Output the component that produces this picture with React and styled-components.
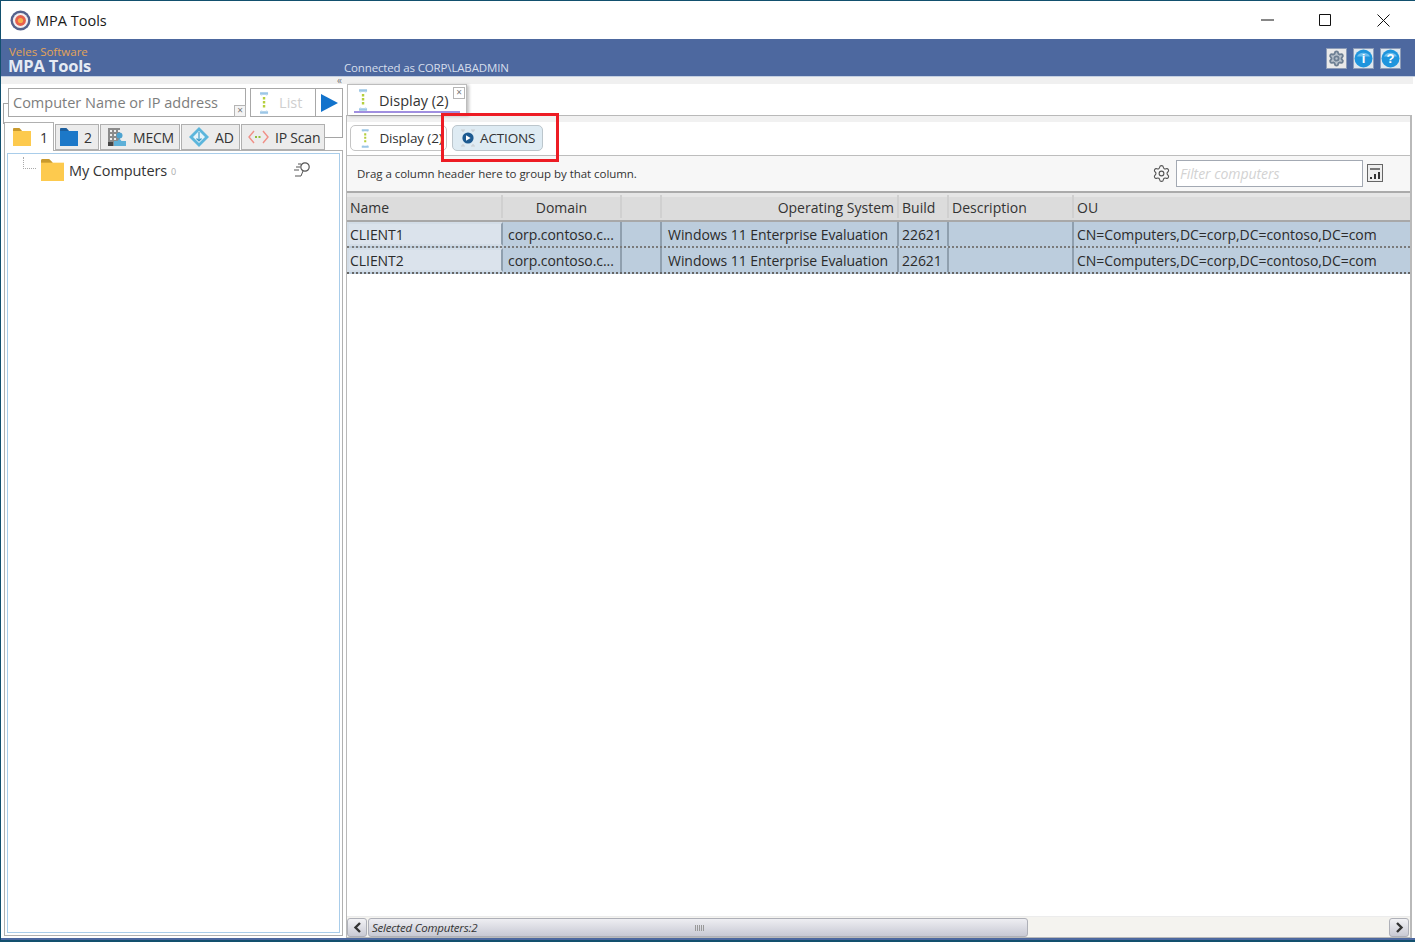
import React from "react";
import styled, { createGlobalStyle } from "styled-components";
import { Settings } from "lucide-react";

const GlobalStyle = createGlobalStyle`
  html, body { margin: 0; padding: 0; background: #fff; overflow: hidden; }
  body { font-family: "Open Sans", "Noto Sans", sans-serif; color: #333; }
  * { box-sizing: border-box; }
`;

const Frame = styled.div`
  width: 1415px;
  height: 942px;
  display: flex;
  flex-direction: column;
  border-top: 1px solid #12506e;
  border-left: 1px solid #12506e;
  background: #fff;
`;

const TitleBar = styled.div`
  height: 38px;
  flex: none;
  display: flex;
  align-items: center;
  padding-left: 9px;
  font-size: 14.5px;
  color: #1a1a1a;
`;

const TitleText = styled.span`
  margin-left: 5px;
`;

const WindowButtons = styled.div`
  margin-left: auto;
  display: flex;
  padding-right: 3px;
`;

const WindowButton = styled.div`
  width: 58px;
  height: 38px;
  display: flex;
  align-items: center;
  justify-content: center;
`;

const Header = styled.div`
  height: 38px;
  flex: none;
  display: flex;
  align-items: flex-end;
  background: #4d689f;
  border-bottom: 1px solid #c3cfe2;
  padding-left: 7px;
  position: relative;
`;

const Brand = styled.div`
  width: 336px;
  display: flex;
  flex-direction: column;
  padding-bottom: 1px;
`;

const Vendor = styled.div`
  font-size: 11.5px;
  line-height: 11px;
  color: #e3a458;
  padding-left: 1px;
`;

const Product = styled.div`
  font-size: 16.5px;
  line-height: 18px;
  font-weight: 700;
  letter-spacing: -0.2px;
  color: #e6ebf4;
`;

const Connected = styled.div`
  font-size: 11.5px;
  line-height: 15px;
  padding-bottom: 1px;
  letter-spacing: -0.15px;
  color: #d5deec;
`;

const HeaderButtons = styled.div`
  margin-left: auto;
  display: flex;
  gap: 6px;
  padding: 0 14px 7px 0;
`;

const HeaderButton = styled.div`
  width: 21px;
  height: 21px;
  display: flex;
  align-items: center;
  justify-content: center;
  border: 1px solid #8d9cb8;
  background: ${(p) => p.$bg || "#e9e9e9"};
`;

const Strip = styled.div`
  height: 7px;
  flex: none;
  background: #f0f0f0;
  width: 1412px;
`;

const Collapse = styled.div`
  width: 341px;
  text-align: right;
  font-size: 10px;
  line-height: 7px;
  color: #777;
`;

const Columns = styled.div`
  flex: 1;
  min-height: 0;
  display: flex;
`;

const LeftPane = styled.div`
  width: 342px;
  flex: none;
  display: flex;
  flex-direction: column;
  padding: 4px 0 2px 2px;
`;

const SearchRow = styled.div`
  height: 30px;
  flex: none;
  display: flex;
  margin-left: 5px;
  position: relative;
  &::before {
    content: "";
    position: absolute;
    left: -5px;
    top: 15px;
    width: 5px;
    height: 20px;
    border-left: 1px solid #a5a5a5;
    border-top: 1px solid #a5a5a5;
  }
  &::after {
    content: "";
    position: absolute;
    left: 316px;
    top: 29px;
    width: 18px;
    height: 20px;
    border-right: 1px solid #a5a5a5;
    border-bottom: 1px solid #a5a5a5;
  }
`;

const SearchInput = styled.div`
  width: 238px;
  height: 29px;
  border: 1px solid #a8a8a8;
  font-size: 14.5px;
  line-height: 27px;
  padding-left: 4px;
  color: #7d7d7d;
  position: relative;
`;

const ClearBox = styled.div`
  position: absolute;
  right: -1px;
  bottom: -1px;
  width: 12px;
  height: 12px;
  border: 1px solid #b5b5b5;
  background: #f4f4f4;
  color: #777;
  font-size: 10px;
  line-height: 9px;
  text-align: center;
`;

const ListBox = styled.div`
  margin-left: 4px;
  width: 66px;
  height: 29px;
  border: 1px solid #a8a8a8;
  display: flex;
  align-items: center;
  padding-left: 7px;
  gap: 9px;
  font-size: 14.5px;
  color: #cfcfcf;
`;

const GoBox = styled.div`
  width: 27px;
  height: 29px;
  border: 1px solid #a8a8a8;
  border-left: none;
  display: flex;
  align-items: center;
  justify-content: center;
`;

const TabRow = styled.div`
  height: 28px;
  flex: none;
  margin-top: 4px;
  display: flex;
  align-items: flex-end;
  margin-left: 1px;
  position: relative;
  z-index: 1;
`;

const SideTab = styled.div`
  height: ${(p) => (p.$active ? "29px" : "26px")};
  width: ${(p) => p.$w}px;
  flex: none;
  display: flex;
  align-items: center;
  gap: ${(p) => p.$gap ?? 6}px;
  padding-left: ${(p) => p.$pad ?? 5}px;
  font-size: 14px;
  color: #333;
  letter-spacing: -0.2px;
  background: ${(p) => (p.$active ? "#fff" : "#ececec")};
  border: 1px solid #b0b0b0;
  border-bottom: ${(p) => (p.$active ? "none" : "1px solid #b0b0b0")};
  margin-bottom: ${(p) => (p.$active ? "-1px" : "0")};
  margin-left: ${(p) => (p.$active ? "0" : "1px")};
`;

const SidePanel = styled.div`
  flex: 1;
  min-height: 0;
  margin-left: 1px;
  width: 339px;
  border: 1px solid #b0b0b0;
  padding: 2px;
`;

const TreeBox = styled.div`
  height: 100%;
  border: 1px solid #a9cdea;
  position: relative;
`;

const TreeRow = styled.div`
  display: flex;
  align-items: center;
  height: 26px;
  margin-top: 3px;
  padding-left: 33px;
  font-size: 14.5px;
  color: #333;
  letter-spacing: -0.1px;
  position: relative;
  &::before {
    content: "";
    position: absolute;
    left: 15px;
    top: 0;
    width: 12px;
    height: 11px;
    border-left: 1px dotted #aaa;
    border-bottom: 1px dotted #aaa;
  }
`;

const TreeLabel = styled.span`
  margin-left: 5px;
`;

const TreeCount = styled.span`
  margin-left: 4px;
  margin-top: 3px;
  font-size: 9px;
  color: #aaa;
`;

const TreeSearch = styled.div`
  position: absolute;
  right: 27px;
  top: 4px;
`;

const RightPane = styled.div`
  width: 1066px;
  margin-left: 3px;
  flex: none;
  display: flex;
  flex-direction: column;
`;

const DocTabs = styled.div`
  height: 32px;
  flex: none;
  border-bottom: 1px solid #b9b9b9;
  padding-left: 1px;
`;

const DocTab = styled.div`
  width: 120px;
  height: 31px;
  border: 1px solid #bdbdbd;
  border-bottom: none;
  box-shadow: 2px 1px 3px rgba(0, 0, 0, 0.25);
  background: #fff;
  position: relative;
  display: flex;
  align-items: center;
  padding-left: 9px;
  gap: 10px;
  font-size: 14.5px;
  color: #333;
  &::after {
    content: "";
    position: absolute;
    left: 6px;
    right: 6px;
    bottom: 2px;
    height: 2px;
    background: #a08fe0;
  }
`;

const DocClose = styled.div`
  position: absolute;
  right: 1px;
  top: 2px;
  width: 12px;
  height: 12px;
  border: 1px solid #b5b5b5;
  color: #777;
  font-size: 10px;
  line-height: 9px;
  text-align: center;
`;

const Content = styled.div`
  flex: 1;
  min-height: 0;
  display: flex;
  flex-direction: column;
  border-left: 1px solid #b9b9b9;
  border-right: 2px solid #b9b9b9;
  border-bottom: 1px solid #b9b9b9;
`;

const GreyBand = styled.div`
  height: 6px;
  flex: none;
  background: #f1f1f1;
`;

const SubTabs = styled.div`
  height: 34px;
  flex: none;
  display: flex;
  align-items: center;
  padding: 0 0 1px 3px;
  border-bottom: 1px solid #bdbdbd;
  position: relative;
`;

const SubTab = styled.div`
  height: 26px;
  width: ${(p) => p.$w}px;
  margin-right: ${(p) => p.$mr || 0}px;
  border: 1px solid ${(p) => (p.$active ? "#bcc6cc" : "#c4c4c4")};
  border-radius: 5px;
  background: ${(p) => (p.$active ? "#deebf3" : "#fff")};
  display: flex;
  align-items: center;
  gap: ${(p) => p.$gap}px;
  padding-left: ${(p) => p.$pad}px;
  font-size: 13.5px;
  letter-spacing: -0.15px;
  color: #333;
`;

const Highlight = styled.div`
  position: absolute;
  left: 94px;
  top: -9px;
  width: 118px;
  height: 49px;
  border: 3px solid #ed1c24;
  pointer-events: none;
`;

const Toolbar = styled.div`
  height: 37px;
  flex: none;
  display: flex;
  align-items: center;
  padding: 0 27px 1px 10px;
  background: #f7f7f7;
  border-bottom: 2px solid #ababab;
  font-size: 11.5px;
  letter-spacing: -0.05px;
  color: #333;
`;

const FilterIcon = styled.div`
  margin-left: auto;
  margin-right: 5px;
  display: flex;
  color: #555;
`;

const FilterInput = styled.div`
  width: 187px;
  height: 27px;
  border: 1px solid #a3a9b3;
  background: #fff;
  font-size: 14px;
  font-style: italic;
  line-height: 25px;
  padding-left: 3px;
  color: #d2d2d2;
`;

const StatsButton = styled.div`
  margin-left: 4px;
  display: flex;
`;

const HeadRow = styled.div`
  height: 29px;
  flex: none;
  display: grid;
  grid-template-columns: 156px 119px 40px 237px 50px 125px 1fr;
  background: linear-gradient(#e6e6e6 0, #e6e6e6 4px, #dcdcdc 4px);
  border-bottom: 2px solid #a8a8a8;
`;

const HeadCell = styled.div`
  font-size: 14px;
  line-height: 25px;
  margin-top: 2px;
  height: 23px;
  padding: 0 3px;
  color: #333;
  text-align: ${(p) => p.$align || "left"};
  border-right: 2px solid #d0d0d0;
  white-space: nowrap;
  &:last-child { border-right: none; }
`;

const GridRow = styled.div`
  height: 26px;
  flex: none;
  display: grid;
  grid-template-columns: 156px 119px 40px 237px 50px 125px 1fr;
  background: #bccddd;
  border-bottom: 2px dotted ${(p) => (p.$last ? "#666" : "#7a7a7a")};
`;

const Cell = styled.div`
  font-size: 14px;
  line-height: 25px;
  padding-left: ${(p) => p.$pad ?? 3}px;
  color: #2b2b2b;
  white-space: nowrap;
  overflow: hidden;
  letter-spacing: -0.05px;
  border-right: 2px solid #8f9fae;
  &:last-child { border-right: none; }
`;

const NameCell = styled(Cell)`
  background: #dbe3ec;
  border: 2px solid #d3dde7;
  border-right: 2px solid #8f9fae;
  line-height: 21px;
  padding-left: 1px;
`;

const Spacer = styled.div`
  flex: 1;
  min-height: 0;
`;

const ScrollBar = styled.div`
  height: 21px;
  flex: none;
  display: flex;
  align-items: center;
  background: #f4f3ef;
  padding: 0 1px 0 0;
  border-top: 1px solid #ececec;
`;

const ScrollButton = styled.div`
  width: 20px;
  height: 19px;
  flex: none;
  margin-left: ${(p) => (p.$end ? "auto" : "0")};
  border: 1px solid #aeb0b8;
  border-radius: 3px;
  background: linear-gradient(#f2f2f5, #c9cad4);
  display: flex;
  align-items: center;
  justify-content: center;
`;

const ScrollThumb = styled.div`
  width: 660px;
  height: 19px;
  margin-left: 1px;
  border: 1px solid #aeb0b8;
  border-radius: 3px;
  background: linear-gradient(#eeeef2, #c8c9d4);
  font-size: 11.5px;
  font-style: italic;
  letter-spacing: -0.2px;
  line-height: 18px;
  padding-left: 3px;
  color: #333;
  position: relative;
`;

const Grip = styled.div`
  position: absolute;
  left: 326px;
  top: 6px;
  width: 9px;
  height: 6px;
  background: repeating-linear-gradient(90deg, #999 0 1px, transparent 1px 2px);
`;

const BottomEdge = styled.div`
  height: 4px;
  flex: none;
  background: linear-gradient(#4d689f 0, #4d689f 2px, #12506e 2px);
`;

const ListIcon = ({ size = 22 }) => (
  <svg width={size * 0.55} height={size} viewBox="0 0 12 22">
    <path d="M2 1.5h8M2 20.5h8" stroke="#9cc6e6" strokeWidth="2.4" fill="none" />
    <path d="M3.5 2.5v1M8.5 2.5v1M3.5 18.5v1M8.5 18.5v1" stroke="#c2dcef" strokeWidth="1.4" />
    <path d="M6 5v12" stroke="#b5cf3c" strokeWidth="2.4" strokeDasharray="2.4 1.6" fill="none" />
  </svg>
);

const Folder = ({ w = 18, h = 18, color = "#fdca4e", tab = "#c99a2e" }) => (
  <svg width={w} height={h} viewBox="0 0 24 24" preserveAspectRatio="none">
    <path d="M0 1.5C0 .7.7 0 1.5 0h7L12 3.5v2H0z" fill={tab} />
    <path d="M0 4h24v20H0z" fill={color} />
  </svg>
);

const TargetLogo = () => (
  <svg width="21" height="21" viewBox="0 0 21 21">
    <circle cx="10.5" cy="10.5" r="10" fill="#56618c" />
    <circle cx="10.5" cy="10.5" r="7.6" fill="#f1eef0" />
    <circle cx="10.5" cy="10.5" r="5.4" fill="#e8604c" />
    <circle cx="10.5" cy="10.5" r="2.6" fill="#f6b04a" />
  </svg>
);

const MecmIcon = () => (
  <svg width="20" height="20" viewBox="0 0 20 20">
    <path d="M1 1h12v18H1z" fill="#8b8b8b" />
    <path d="M3 3h2v2H3zM7 3h2v2H7zM11 3h2v2h-2zM3 7h2v2H3zM7 7h2v2H7zM3 11h2v2H3zM7 11h2v2H7z" fill="#eee" />
    <path d="M1 15h5v4H1z" fill="#444" />
    <circle cx="12.5" cy="8.5" r="3" fill="#4da3d0" />
    <path d="M7 19v-5h3.5l2-2.5 2 2.5H19v5z" fill="#5db0d8" />
  </svg>
);

const AdIcon = () => (
  <svg width="20" height="20" viewBox="0 0 20 20">
    <path d="M10 0l10 10-10 10L0 10z" fill="#5cb6dc" />
    <path d="M10 4l6 6-6 6-6-6z" fill="#e6f4fa" />
    <path d="M10 5v8M7.5 11.5l2.5 2.5 2.5-2.5" stroke="#3f9dc8" strokeWidth="1.2" fill="none" />
  </svg>
);

const ScanIcon = () => (
  <svg width="21" height="16" viewBox="0 0 21 16">
    <path d="M6 2L1 8l5 6M15 2l5 6-5 6" stroke="#f08f86" strokeWidth="1.4" fill="none" />
    <path d="M7 8h7" stroke="#8fbf3a" strokeWidth="2" strokeDasharray="2 1.5" />
  </svg>
);

const PlayIcon = () => (
  <svg width="19" height="20" viewBox="0 0 19 20">
    <path d="M1 1l17 9-17 9z" fill="#1273cc" />
  </svg>
);

const SpeedSearch = () => (
  <svg width="20" height="16" viewBox="0 0 20 16">
    <circle cx="13" cy="6" r="4.2" fill="none" stroke="#555" strokeWidth="1.2" />
    <path d="M11 10l-2 5H3M6 3h3M4 6h4M2 9h5" stroke="#555" strokeWidth="1" fill="none" />
  </svg>
);

const ActionIcon = () => (
  <svg width="16" height="18" viewBox="0 0 16 18">
    <path d="M1 1h4M11 1h4M1 17h4M11 17h4M3 1v2M13 1v2M3 15v2M13 15v2" stroke="#c9ced2" strokeWidth="1.2" fill="none" />
    <circle cx="8" cy="9" r="5.6" fill="#1d5a91" />
    <path d="M6 6.3l4.6 2.7L6 11.7z" fill="#fff" />
  </svg>
);

const StatsIcon = () => (
  <svg width="16" height="18" viewBox="0 0 16 18">
    <rect x=".5" y=".5" width="15" height="17" fill="#eee" stroke="#666" />
    <path d="M3 4h10v2H3z" fill="#777" />
    <path d="M3 13h2v2H3zM7 10h2v5H7zM11 8h2v7h-2z" fill="#333" />
  </svg>
);

const GearButtonIcon = () => (
  <Settings size={17} color="#6d7f93" strokeWidth={2.6} fill="#b9c2cc" />
);

const RoundIcon = ({ children }) => (
  <svg width="19" height="19" viewBox="0 0 19 19">
    <circle cx="9.5" cy="9.5" r="9" fill="#1f95dd" />
    <path d="M3 7.5a7 6 0 0 1 13 0z" fill="#6fc0ef" />
    <text x="9.5" y="14" textAnchor="middle" fontSize="13" fontWeight="700" fontFamily="Liberation Sans, sans-serif" fill="#fff">
      {children}
    </text>
  </svg>
);

const Chevron = ({ left }) => (
  <svg width="9" height="11" viewBox="0 0 9 11">
    <path d={left ? "M7 1L2.5 5.5 7 10" : "M2 1l4.5 4.5L2 10"} stroke="#333" strokeWidth="2.4" fill="none" />
  </svg>
);

const computers = [
  { name: "CLIENT1", domain: "corp.contoso.c...", os: "Windows 11 Enterprise Evaluation", build: "22621", ou: "CN=Computers,DC=corp,DC=contoso,DC=com" },
  { name: "CLIENT2", domain: "corp.contoso.c...", os: "Windows 11 Enterprise Evaluation", build: "22621", ou: "CN=Computers,DC=corp,DC=contoso,DC=com" },
];

export default function App() {
  return (
    <>
      <GlobalStyle />
      <Frame>
        <TitleBar>
          <TargetLogo />
          <TitleText>MPA Tools</TitleText>
          <WindowButtons>
            <WindowButton>
              <svg width="13" height="2" viewBox="0 0 13 2"><path d="M0 1h13" stroke="#111" /></svg>
            </WindowButton>
            <WindowButton>
              <svg width="12" height="12" viewBox="0 0 12 12"><path d="M.5.5h11v11H.5z" stroke="#111" fill="none" /></svg>
            </WindowButton>
            <WindowButton>
              <svg width="13" height="13" viewBox="0 0 13 13"><path d="M.5.5l12 12M12.5.5l-12 12" stroke="#111" fill="none" /></svg>
            </WindowButton>
          </WindowButtons>
        </TitleBar>

        <Header>
          <Brand>
            <Vendor>Veles Software</Vendor>
            <Product>MPA Tools</Product>
          </Brand>
          <Connected>Connected as CORP\LABADMIN</Connected>
          <HeaderButtons>
            <HeaderButton><GearButtonIcon /></HeaderButton>
            <HeaderButton $bg="#dfe7ee"><RoundIcon>i</RoundIcon></HeaderButton>
            <HeaderButton $bg="#dfe7ee"><RoundIcon>?</RoundIcon></HeaderButton>
          </HeaderButtons>
        </Header>

        <Strip>
          <Collapse>«</Collapse>
        </Strip>

        <Columns>
          <LeftPane>
            <SearchRow>
              <SearchInput>
                Computer Name or IP address
                <ClearBox>×</ClearBox>
              </SearchInput>
              <ListBox>
                <ListIcon />
                List
              </ListBox>
              <GoBox><PlayIcon /></GoBox>
            </SearchRow>

            <TabRow>
              <SideTab $active $w={50} $gap={9} $pad={8}>
                <Folder /> 1
              </SideTab>
              <SideTab $w={44} $pad={4}>
                <Folder color="#1c78c8" tab="#1c5f9e" /> 2
              </SideTab>
              <SideTab $w={80} $pad={6}>
                <MecmIcon /> MECM
              </SideTab>
              <SideTab $w={59} $pad={7}>
                <AdIcon /> AD
              </SideTab>
              <SideTab $w={84} $pad={6}>
                <ScanIcon /> IP Scan
              </SideTab>
            </TabRow>

            <SidePanel>
              <TreeBox>
                <TreeRow>
                  <Folder w={23} h={22} />
                  <TreeLabel>My Computers</TreeLabel>
                  <TreeCount>0</TreeCount>
                  <TreeSearch><SpeedSearch /></TreeSearch>
                </TreeRow>
              </TreeBox>
            </SidePanel>
          </LeftPane>

          <RightPane>
            <DocTabs>
              <DocTab>
                <ListIcon />
                Display (2)
                <DocClose>×</DocClose>
              </DocTab>
            </DocTabs>
            <Content>
              <GreyBand />
              <SubTabs>
                <SubTab $w={97} $gap={9} $pad={9} $mr={5}>
                  <ListIcon size={19} />
                  Display (2)
                </SubTab>
                <SubTab $active $w={91} $gap={4} $pad={7}>
                  <ActionIcon />
                  ACTIONS
                </SubTab>
                <Highlight />
              </SubTabs>
              <Toolbar>
                Drag a column header here to group by that column.
                <FilterIcon><Settings size={19} strokeWidth={1.4} /></FilterIcon>
                <FilterInput>Filter computers</FilterInput>
                <StatsButton><StatsIcon /></StatsButton>
              </Toolbar>
              <HeadRow>
                <HeadCell>Name</HeadCell>
                <HeadCell $align="center">Domain</HeadCell>
                <HeadCell />
                <HeadCell $align="right">Operating System</HeadCell>
                <HeadCell>Build</HeadCell>
                <HeadCell>Description</HeadCell>
                <HeadCell>OU</HeadCell>
              </HeadRow>
              {computers.map((c, i) => (
                <GridRow key={c.name} $last={i === computers.length - 1}>
                  <NameCell>{c.name}</NameCell>
                  <Cell $pad={5}>{c.domain}</Cell>
                  <Cell />
                  <Cell $pad={6}>{c.os}</Cell>
                  <Cell>{c.build}</Cell>
                  <Cell />
                  <Cell>{c.ou}</Cell>
                </GridRow>
              ))}
              <Spacer />
              <ScrollBar>
                <ScrollButton><Chevron left /></ScrollButton>
                <ScrollThumb>
                  Selected Computers:2
                  <Grip />
                </ScrollThumb>
                <ScrollButton $end><Chevron /></ScrollButton>
              </ScrollBar>
            </Content>
          </RightPane>
        </Columns>
        <BottomEdge />
      </Frame>
    </>
  );
}
